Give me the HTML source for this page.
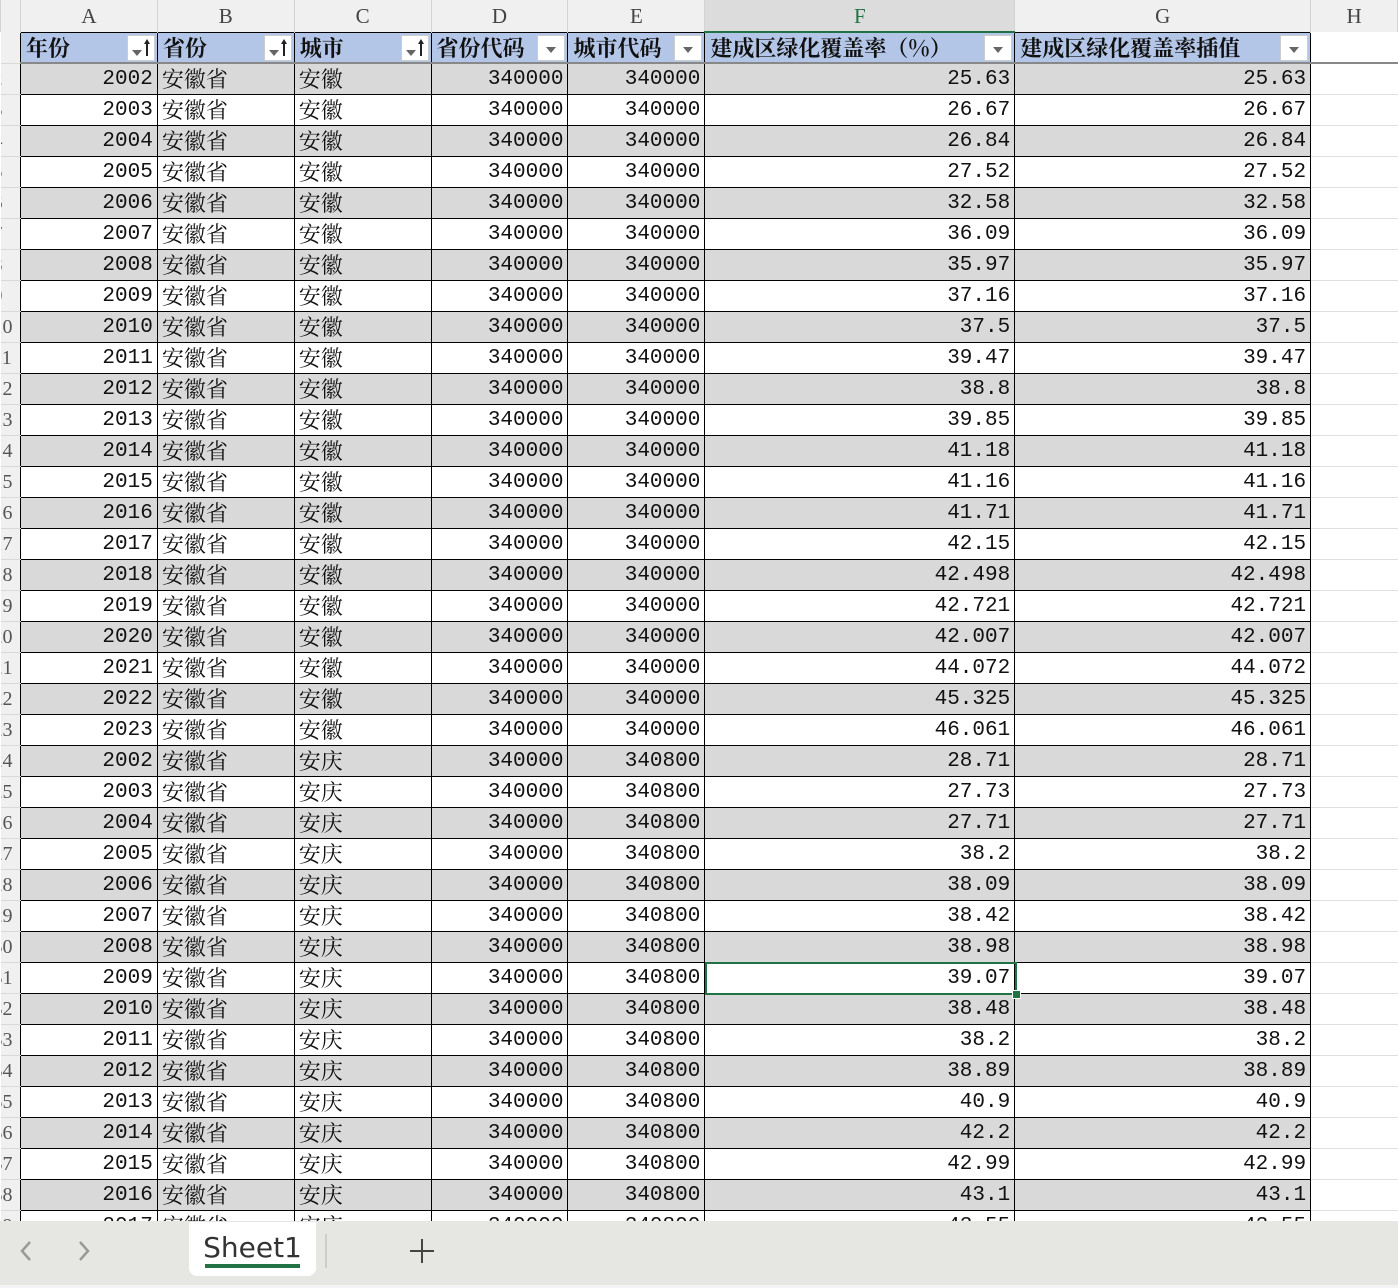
<!DOCTYPE html>
<html><head><meta charset="utf-8"><style>
*{margin:0;padding:0;box-sizing:border-box}
body{width:1398px;height:1288px;overflow:hidden;background:#fff;position:relative;font-family:"Liberation Mono","Noto Serif CJK SC",monospace}
table{border-collapse:collapse;table-layout:fixed;position:absolute;left:0;top:0}
td{height:31px;border:1px solid #000;font-size:21px;line-height:26px;padding:3px 4px 0 4px;white-space:nowrap;overflow:hidden;font-family:"Liberation Mono","Noto Serif CJK SC",monospace;color:#111;vertical-align:top}
td.c{font-family:"Noto Serif CJK SC",serif;font-size:22px;text-align:left;padding-top:1px;line-height:28px}
td.n{text-align:right}
td.r{border:none;border-bottom:1px solid #d8d8d8;background:#f0f0f0;color:#555;font-family:"Liberation Serif",serif;font-size:20px;padding:2px 0 0 0;line-height:27px;text-align:left;text-indent:-8px}
td.h{border:none;border-left:1px solid #d4d4d4;border-right:1px solid #d4d4d4;background:#f0f0f0;color:#444;text-align:center;font-family:"Liberation Serif",serif;font-size:21px;height:32px;padding-top:3px}
td.hs{background:#dcdcdc;border-bottom:2px solid #217346;color:#217346}
td.x{border:none;border-bottom:1px solid #e0e0e0;border-left:1px solid #000}
tr.g td.n,tr.g td.c{background:#d9d9d9}
tr.hd td.b{background:#b4c6e7;font-family:"Noto Serif CJK SC",serif;font-weight:bold;font-size:22px;position:relative;padding:0 0 0 5px;line-height:29px;border-bottom:2px solid #888}
.f{position:absolute;right:2px;top:2px;width:28px;height:26px;background:#fff;border:1px solid #ccc}
.f:before{content:"";position:absolute;left:8px;top:11px;border-left:5px solid transparent;border-right:5px solid transparent;border-top:6px solid #666}
.f.s:before{left:4px;top:14px}
.f.s:after{content:"";position:absolute;right:6px;top:5px;width:2px;height:15px;background:#222}
.f.s i{position:absolute;right:4px;top:3px;border-left:3px solid transparent;border-right:3px solid transparent;border-bottom:5px solid #222}
#sel{position:absolute;left:705px;top:962px;width:312px;height:33px;border:2px solid #217346}
#sel:after{content:"";position:absolute;right:-6px;bottom:-6px;width:7px;height:7px;background:#217346;border:1px solid #fff}
#bar{position:absolute;left:0;top:1221px;width:1398px;height:64px;background:#e6e6e3}
#bot{position:absolute;left:0;top:1285px;width:1398px;height:3px;background:#f3f3f3}
#tab{position:absolute;left:189px;top:1222px;width:127px;height:54px;background:#fff;border-radius:0 0 8px 8px;font-family:"DejaVu Sans",sans-serif;font-size:28px;color:#333;text-align:center;line-height:52px}
#tab i{position:absolute;left:16px;right:16px;bottom:8px;height:4px;background:#217346}
</style></head><body>
<table>
<colgroup><col style="width:20px"><col style="width:137px"><col style="width:137px"><col style="width:137px"><col style="width:137px"><col style="width:137px"><col style="width:310px"><col style="width:296px"><col style="width:87px"></colgroup>
<tr><td class="h" style="background:#f0f0f0"></td><td class="h">A</td><td class="h">B</td><td class="h">C</td><td class="h">D</td><td class="h">E</td><td class="h hs">F</td><td class="h">G</td><td class="h">H</td></tr>
<tr class="hd"><td class="r"></td><td class="b">年份<span class="f s"><i></i></span></td><td class="b">省份<span class="f s"><i></i></span></td><td class="b">城市<span class="f s"><i></i></span></td><td class="b">省份代码<span class="f"></span></td><td class="b">城市代码<span class="f"></span></td><td class="b">建成区绿化覆盖率（%）<span class="f"></span></td><td class="b">建成区绿化覆盖率插值<span class="f"></span></td><td class="x" style="border-bottom:2px solid #888"></td></tr>
<tr class="g"><td class="r">2</td><td class="n">2002</td><td class="c">安徽省</td><td class="c">安徽</td><td class="n">340000</td><td class="n">340000</td><td class="n">25.63</td><td class="n">25.63</td><td class="x"></td></tr>
<tr><td class="r">3</td><td class="n">2003</td><td class="c">安徽省</td><td class="c">安徽</td><td class="n">340000</td><td class="n">340000</td><td class="n">26.67</td><td class="n">26.67</td><td class="x"></td></tr>
<tr class="g"><td class="r">4</td><td class="n">2004</td><td class="c">安徽省</td><td class="c">安徽</td><td class="n">340000</td><td class="n">340000</td><td class="n">26.84</td><td class="n">26.84</td><td class="x"></td></tr>
<tr><td class="r">5</td><td class="n">2005</td><td class="c">安徽省</td><td class="c">安徽</td><td class="n">340000</td><td class="n">340000</td><td class="n">27.52</td><td class="n">27.52</td><td class="x"></td></tr>
<tr class="g"><td class="r">6</td><td class="n">2006</td><td class="c">安徽省</td><td class="c">安徽</td><td class="n">340000</td><td class="n">340000</td><td class="n">32.58</td><td class="n">32.58</td><td class="x"></td></tr>
<tr><td class="r">7</td><td class="n">2007</td><td class="c">安徽省</td><td class="c">安徽</td><td class="n">340000</td><td class="n">340000</td><td class="n">36.09</td><td class="n">36.09</td><td class="x"></td></tr>
<tr class="g"><td class="r">8</td><td class="n">2008</td><td class="c">安徽省</td><td class="c">安徽</td><td class="n">340000</td><td class="n">340000</td><td class="n">35.97</td><td class="n">35.97</td><td class="x"></td></tr>
<tr><td class="r">9</td><td class="n">2009</td><td class="c">安徽省</td><td class="c">安徽</td><td class="n">340000</td><td class="n">340000</td><td class="n">37.16</td><td class="n">37.16</td><td class="x"></td></tr>
<tr class="g"><td class="r">10</td><td class="n">2010</td><td class="c">安徽省</td><td class="c">安徽</td><td class="n">340000</td><td class="n">340000</td><td class="n">37.5</td><td class="n">37.5</td><td class="x"></td></tr>
<tr><td class="r">11</td><td class="n">2011</td><td class="c">安徽省</td><td class="c">安徽</td><td class="n">340000</td><td class="n">340000</td><td class="n">39.47</td><td class="n">39.47</td><td class="x"></td></tr>
<tr class="g"><td class="r">12</td><td class="n">2012</td><td class="c">安徽省</td><td class="c">安徽</td><td class="n">340000</td><td class="n">340000</td><td class="n">38.8</td><td class="n">38.8</td><td class="x"></td></tr>
<tr><td class="r">13</td><td class="n">2013</td><td class="c">安徽省</td><td class="c">安徽</td><td class="n">340000</td><td class="n">340000</td><td class="n">39.85</td><td class="n">39.85</td><td class="x"></td></tr>
<tr class="g"><td class="r">14</td><td class="n">2014</td><td class="c">安徽省</td><td class="c">安徽</td><td class="n">340000</td><td class="n">340000</td><td class="n">41.18</td><td class="n">41.18</td><td class="x"></td></tr>
<tr><td class="r">15</td><td class="n">2015</td><td class="c">安徽省</td><td class="c">安徽</td><td class="n">340000</td><td class="n">340000</td><td class="n">41.16</td><td class="n">41.16</td><td class="x"></td></tr>
<tr class="g"><td class="r">16</td><td class="n">2016</td><td class="c">安徽省</td><td class="c">安徽</td><td class="n">340000</td><td class="n">340000</td><td class="n">41.71</td><td class="n">41.71</td><td class="x"></td></tr>
<tr><td class="r">17</td><td class="n">2017</td><td class="c">安徽省</td><td class="c">安徽</td><td class="n">340000</td><td class="n">340000</td><td class="n">42.15</td><td class="n">42.15</td><td class="x"></td></tr>
<tr class="g"><td class="r">18</td><td class="n">2018</td><td class="c">安徽省</td><td class="c">安徽</td><td class="n">340000</td><td class="n">340000</td><td class="n">42.498</td><td class="n">42.498</td><td class="x"></td></tr>
<tr><td class="r">19</td><td class="n">2019</td><td class="c">安徽省</td><td class="c">安徽</td><td class="n">340000</td><td class="n">340000</td><td class="n">42.721</td><td class="n">42.721</td><td class="x"></td></tr>
<tr class="g"><td class="r">20</td><td class="n">2020</td><td class="c">安徽省</td><td class="c">安徽</td><td class="n">340000</td><td class="n">340000</td><td class="n">42.007</td><td class="n">42.007</td><td class="x"></td></tr>
<tr><td class="r">21</td><td class="n">2021</td><td class="c">安徽省</td><td class="c">安徽</td><td class="n">340000</td><td class="n">340000</td><td class="n">44.072</td><td class="n">44.072</td><td class="x"></td></tr>
<tr class="g"><td class="r">22</td><td class="n">2022</td><td class="c">安徽省</td><td class="c">安徽</td><td class="n">340000</td><td class="n">340000</td><td class="n">45.325</td><td class="n">45.325</td><td class="x"></td></tr>
<tr><td class="r">23</td><td class="n">2023</td><td class="c">安徽省</td><td class="c">安徽</td><td class="n">340000</td><td class="n">340000</td><td class="n">46.061</td><td class="n">46.061</td><td class="x"></td></tr>
<tr class="g"><td class="r">24</td><td class="n">2002</td><td class="c">安徽省</td><td class="c">安庆</td><td class="n">340000</td><td class="n">340800</td><td class="n">28.71</td><td class="n">28.71</td><td class="x"></td></tr>
<tr><td class="r">25</td><td class="n">2003</td><td class="c">安徽省</td><td class="c">安庆</td><td class="n">340000</td><td class="n">340800</td><td class="n">27.73</td><td class="n">27.73</td><td class="x"></td></tr>
<tr class="g"><td class="r">26</td><td class="n">2004</td><td class="c">安徽省</td><td class="c">安庆</td><td class="n">340000</td><td class="n">340800</td><td class="n">27.71</td><td class="n">27.71</td><td class="x"></td></tr>
<tr><td class="r">27</td><td class="n">2005</td><td class="c">安徽省</td><td class="c">安庆</td><td class="n">340000</td><td class="n">340800</td><td class="n">38.2</td><td class="n">38.2</td><td class="x"></td></tr>
<tr class="g"><td class="r">28</td><td class="n">2006</td><td class="c">安徽省</td><td class="c">安庆</td><td class="n">340000</td><td class="n">340800</td><td class="n">38.09</td><td class="n">38.09</td><td class="x"></td></tr>
<tr><td class="r">29</td><td class="n">2007</td><td class="c">安徽省</td><td class="c">安庆</td><td class="n">340000</td><td class="n">340800</td><td class="n">38.42</td><td class="n">38.42</td><td class="x"></td></tr>
<tr class="g"><td class="r">30</td><td class="n">2008</td><td class="c">安徽省</td><td class="c">安庆</td><td class="n">340000</td><td class="n">340800</td><td class="n">38.98</td><td class="n">38.98</td><td class="x"></td></tr>
<tr><td class="r">31</td><td class="n">2009</td><td class="c">安徽省</td><td class="c">安庆</td><td class="n">340000</td><td class="n">340800</td><td class="n">39.07</td><td class="n">39.07</td><td class="x"></td></tr>
<tr class="g"><td class="r">32</td><td class="n">2010</td><td class="c">安徽省</td><td class="c">安庆</td><td class="n">340000</td><td class="n">340800</td><td class="n">38.48</td><td class="n">38.48</td><td class="x"></td></tr>
<tr><td class="r">33</td><td class="n">2011</td><td class="c">安徽省</td><td class="c">安庆</td><td class="n">340000</td><td class="n">340800</td><td class="n">38.2</td><td class="n">38.2</td><td class="x"></td></tr>
<tr class="g"><td class="r">34</td><td class="n">2012</td><td class="c">安徽省</td><td class="c">安庆</td><td class="n">340000</td><td class="n">340800</td><td class="n">38.89</td><td class="n">38.89</td><td class="x"></td></tr>
<tr><td class="r">35</td><td class="n">2013</td><td class="c">安徽省</td><td class="c">安庆</td><td class="n">340000</td><td class="n">340800</td><td class="n">40.9</td><td class="n">40.9</td><td class="x"></td></tr>
<tr class="g"><td class="r">36</td><td class="n">2014</td><td class="c">安徽省</td><td class="c">安庆</td><td class="n">340000</td><td class="n">340800</td><td class="n">42.2</td><td class="n">42.2</td><td class="x"></td></tr>
<tr><td class="r">37</td><td class="n">2015</td><td class="c">安徽省</td><td class="c">安庆</td><td class="n">340000</td><td class="n">340800</td><td class="n">42.99</td><td class="n">42.99</td><td class="x"></td></tr>
<tr class="g"><td class="r">38</td><td class="n">2016</td><td class="c">安徽省</td><td class="c">安庆</td><td class="n">340000</td><td class="n">340800</td><td class="n">43.1</td><td class="n">43.1</td><td class="x"></td></tr>
<tr><td class="r">39</td><td class="n">2017</td><td class="c">安徽省</td><td class="c">安庆</td><td class="n">340000</td><td class="n">340800</td><td class="n">43.55</td><td class="n">43.55</td><td class="x"></td></tr>
</table>
<div id="sel"></div>
<div id="bar"></div>
<div id="bot"></div>
<svg style="position:absolute;left:10px;top:1238px" width="90" height="26"><path d="M20 4 L12 13 L20 22" fill="none" stroke="#999" stroke-width="2.5"/><path d="M80 4 L88 13 L80 22" fill="none" stroke="#999" stroke-width="2.5" transform="translate(-10,0)"/></svg>
<div id="tab">Sheet1<i></i></div>
<div style="position:absolute;left:325px;top:1234px;width:2px;height:34px;background:#ccc"></div>
<div style="position:absolute;left:410px;top:1250px;width:24px;height:2px;background:#444"></div>
<div style="position:absolute;left:421px;top:1239px;width:2px;height:24px;background:#444"></div>
</body></html>
